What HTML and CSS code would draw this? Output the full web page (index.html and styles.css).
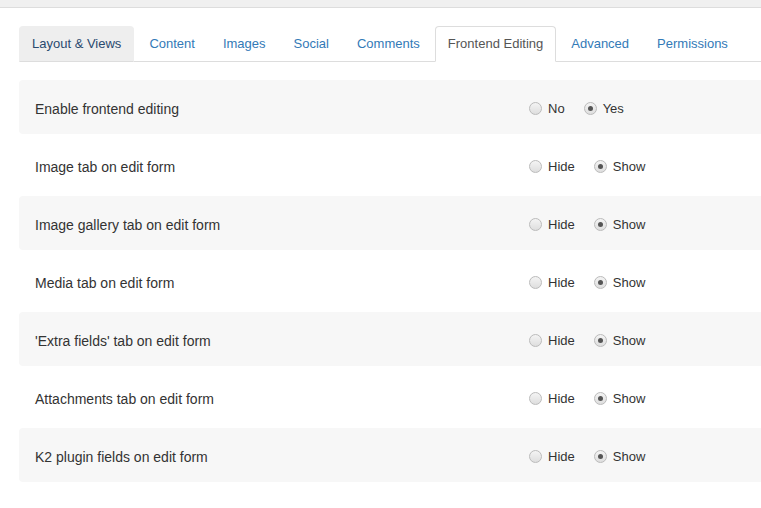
FILE: index.html
```html
<!DOCTYPE html>
<html lang="en">
<head>
<meta charset="UTF-8">
<title>Item Parameters - Frontend Editing</title>
<meta name="viewport" content="width=device-width, initial-scale=1">
<link rel="stylesheet" href="styles.css">
</head>
<body>

<div class="topbar"></div>

<div class="wrap">

<ul class="tabs">
<li class="tab hover">Layout &amp; Views</li>
<li class="tab">Content</li>
<li class="tab">Images</li>
<li class="tab">Social</li>
<li class="tab">Comments</li>
<li class="tab active">Frontend Editing</li>
<li class="tab">Advanced</li>
<li class="tab">Permissions</li>
</ul>

<div class="rows">

<div class="row">
<div class="label">Enable frontend editing</div>
<div class="opts">
<span class="opt"><span class="radio"></span>No</span>
<span class="opt"><span class="radio on"></span>Yes</span>
</div>
</div>

<div class="row">
<div class="label">Image tab on edit form</div>
<div class="opts">
<span class="opt"><span class="radio"></span>Hide</span>
<span class="opt"><span class="radio on"></span>Show</span>
</div>
</div>

<div class="row">
<div class="label">Image gallery tab on edit form</div>
<div class="opts">
<span class="opt"><span class="radio"></span>Hide</span>
<span class="opt"><span class="radio on"></span>Show</span>
</div>
</div>

<div class="row">
<div class="label">Media tab on edit form</div>
<div class="opts">
<span class="opt"><span class="radio"></span>Hide</span>
<span class="opt"><span class="radio on"></span>Show</span>
</div>
</div>

<div class="row">
<div class="label">'Extra fields' tab on edit form</div>
<div class="opts">
<span class="opt"><span class="radio"></span>Hide</span>
<span class="opt"><span class="radio on"></span>Show</span>
</div>
</div>

<div class="row">
<div class="label">Attachments tab on edit form</div>
<div class="opts">
<span class="opt"><span class="radio"></span>Hide</span>
<span class="opt"><span class="radio on"></span>Show</span>
</div>
</div>

<div class="row">
<div class="label">K2 plugin fields on edit form</div>
<div class="opts">
<span class="opt"><span class="radio"></span>Hide</span>
<span class="opt"><span class="radio on"></span>Show</span>
</div>
</div>

</div>

</div>

</body>
</html>
```

FILE: styles.css
```css
html{
overflow:hidden;
}

body{
margin:0;
background:#fff;
font-family:"Liberation Sans",Arial,sans-serif;
font-size:14px;
color:#333;
}

.topbar{
height:7px;
background:#f0f0f0;
border-bottom:1px solid #ddd;
}

.wrap{
margin:18px -40px 0 19px;
}

.tabs{
display:flex;
list-style:none;
margin:0;
padding:0;
border-bottom:1px solid #ddd;
font-size:13px;
}

.tab{
margin:0 2px -1px 0;
padding:7px 12px;
line-height:20px;
border:1px solid transparent;
border-radius:4px 4px 0 0;
color:#337ab7;
white-space:nowrap;
}

.tab.hover{
background:#eee;
border-color:#eee #eee #ddd;
color:#2a4a6e;
}

.tab.active{
background:#fff;
border-color:#ddd #ddd #fff;
color:#555;
}

.rows{
margin-top:18px;
}

.row{
display:flex;
align-items:center;
box-sizing:border-box;
height:54px;
padding-top:3px;
margin-bottom:4px;
border-radius:4px;
}

.row:nth-child(odd){
background:#f7f7f7;
}

.label{
width:494px;
padding-left:16px;
}

.opts{
display:flex;
gap:19px;
font-size:13px;
}

.opt{
display:flex;
align-items:center;
gap:6px;
}

.radio{
box-sizing:border-box;
width:13px;
height:13px;
border-radius:50%;
border:1px solid #bbb;
background:linear-gradient(#f4f4f4,#dedede);
position:relative;
}

.radio.on::after{
content:"";
position:absolute;
left:3px;
top:3px;
width:5px;
height:5px;
border-radius:50%;
background:#555;
}
```
